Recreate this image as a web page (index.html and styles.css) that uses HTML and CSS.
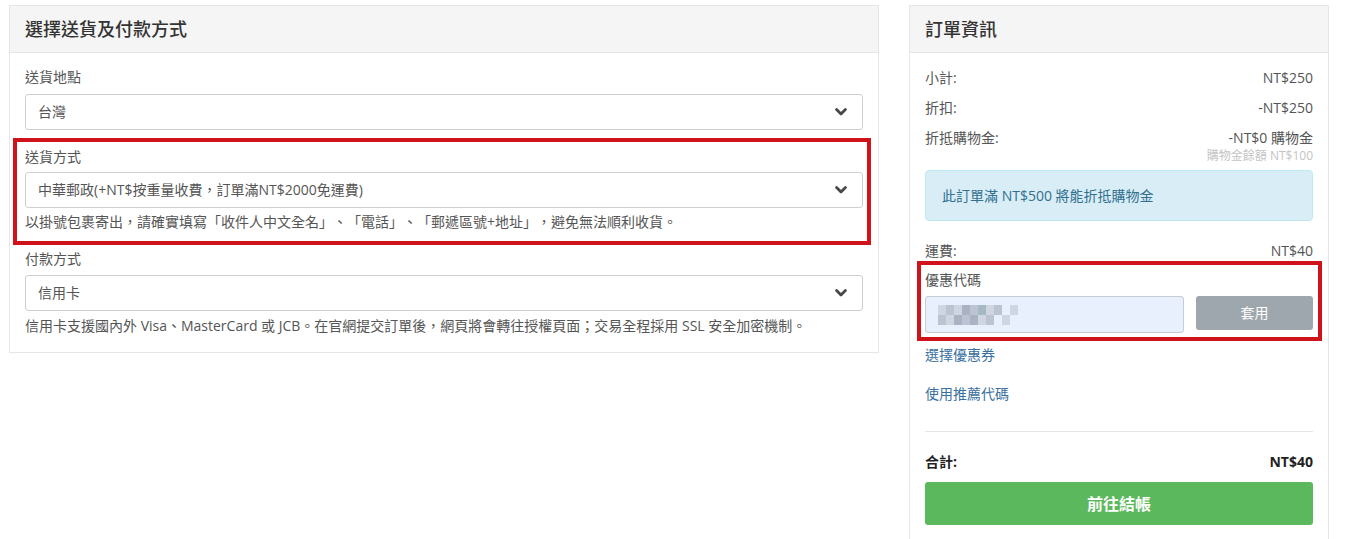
FILE: index.html
```html
<!DOCTYPE html>
<html lang="zh-Hant">
<head>
<meta charset="utf-8">
<title>結帳</title>
<link rel="stylesheet" href="styles.css">
</head>
<body>
<div class="page">
  <section class="panel panel-left">
    <div class="panel-head">選擇送貨及付款方式</div>
    <div class="panel-body">
      <div class="label first">送貨地點</div>
      <div class="select">
        <span>台灣</span>
        <svg class="chev" width="12" height="8" viewBox="0 0 12 8"><polyline points="1.6,1.6 6,6 10.4,1.6" fill="none" stroke="#474747" stroke-width="2.8" stroke-linecap="round" stroke-linejoin="round"/></svg>
      </div>
      <div class="highlight hl-left">
        <div class="label l2">送貨方式</div>
        <div class="select s2">
          <span>中華郵政(+NT$按重量收費，訂單滿NT$2000免運費)</span>
          <svg class="chev" width="12" height="8" viewBox="0 0 12 8"><polyline points="1.6,1.6 6,6 10.4,1.6" fill="none" stroke="#474747" stroke-width="2.8" stroke-linecap="round" stroke-linejoin="round"/></svg>
        </div>
        <div class="help h2">以掛號包裹寄出，請確實填寫「收件人中文全名」、「電話」、「郵遞區號+地址」，避免無法順利收貨。</div>
      </div>
      <div class="label l3">付款方式</div>
      <div class="select s3">
        <span>信用卡</span>
        <svg class="chev" width="12" height="8" viewBox="0 0 12 8"><polyline points="1.6,1.6 6,6 10.4,1.6" fill="none" stroke="#474747" stroke-width="2.8" stroke-linecap="round" stroke-linejoin="round"/></svg>
      </div>
      <div class="help h3">信用卡支援國內外 Visa、MasterCard 或 JCB。在官網提交訂單後，網頁將會轉往授權頁面；交易全程採用 SSL 安全加密機制。</div>
    </div>
  </section>

  <section class="panel panel-right">
    <div class="panel-head">訂單資訊</div>
    <div class="panel-body rbody">
      <div class="row"><span>小計:</span><span>NT$250</span></div>
      <div class="row"><span>折扣:</span><span>-NT$250</span></div>
      <div class="row last"><span>折抵購物金:</span><span>-NT$0 購物金</span></div>
      <div class="balance">購物金餘額 NT$100</div>
      <div class="alert">此訂單滿 NT$500 將能折抵購物金</div>
      <div class="row ship"><span>運費:</span><span>NT$40</span></div>
      <div class="highlight hl-right">
        <div class="label l4">優惠代碼</div>
        <div class="coupon">
          <div class="code-input">
            <div class="blur">
              <div class="brow"><i class="c1"></i><i class="c2"></i><i class="c1"></i><i class="c3"></i><i class="c2"></i><i class="c4"></i><i class="c1"></i><i class="c2"></i><i class="c0"></i><i class="c1"></i></div>
              <div class="brow"><i class="c2"></i><i class="c1"></i><i class="c3"></i><i class="c2"></i><i class="c3"></i><i class="c1"></i><i class="c2"></i><i class="c0"></i><i class="c1"></i><i class="c0"></i></div>
            </div>
          </div>
          <div class="apply">套用</div>
        </div>
      </div>
      <a class="link first-link">選擇優惠券</a>
      <a class="link second-link">使用推薦代碼</a>
      <div class="divider"></div>
      <div class="row total"><span>合計:</span><span>NT$40</span></div>
      <div class="checkout">前往結帳</div>
    </div>
  </section>
</div>
</body>
</html>
```

FILE: styles.css
```css
* { box-sizing: border-box; }
html, body { margin: 0; padding: 0; background: #fff; }
body {
  font-family: "Open Sans", "Noto Sans CJK TC", sans-serif;
  font-size: 14px;
  color: #555;
  line-height: 20px;
  text-spacing-trim: space-all;
}
.page {
  display: flex;
  align-items: flex-start;
  gap: 30px;
  padding: 5px 0 0 9px;
}
.panel {
  background: #fff;
  border: 1px solid #e6e6e6;
}
.panel-left { width: 870px; }
.panel-right { width: 420px; border-bottom: none; }
.panel-head {
  height: 47px;
  background: #f5f5f5;
  border-bottom: 1px solid #e6e6e6;
  padding: 11px 15px 0;
  font-size: 18px;
  line-height: 24px;
  color: #333;
  font-weight: 500;
}
.panel-body { padding: 14px 15px 16px 15px; }
.label { color: #555; line-height: 20px; }
.label.first { margin-bottom: 7px; }
.select {
  height: 36px;
  border: 1px solid #cfcfcf;
  border-radius: 3px;
  display: flex;
  align-items: center;
  justify-content: space-between;
  padding: 0 15px 0 12px;
  color: #555;
}
.chev { display: block; }
.highlight { border: 4px solid #d0121b; }
.hl-left {
  margin: 8px -8px 0 -12px;
  padding: 5px 4px 9px 8px;
}
.l2 { margin-bottom: 5px; }
.help { color: #555; }
.h2 { margin-top: 4px; }
.l3 { margin-top: 4px; margin-bottom: 6px; }
.h3 { margin-top: 5px; }

.rbody { padding: 15px 15px 40px 15px; }
.row {
  display: flex;
  justify-content: space-between;
  line-height: 20px;
  color: #555;
  margin-bottom: 10px;
}
.row.last { margin-bottom: 0; }
.balance {
  text-align: right;
  font-size: 12px;
  line-height: 14px;
  color: #c4c4c4;
  margin-top: 1px;
}
.alert {
  margin-top: 7px;
  background: #d9edf7;
  border: 1px solid #bce8f1;
  border-radius: 4px;
  color: #31708f;
  padding: 15px 16px;
  line-height: 19px;
}
.row.ship { margin-top: 20px; margin-bottom: 0; }
.hl-right {
  margin: 0 -9px 0 -8px;
  padding: 5px 5px 4px 4px;
}
.l4 { margin-bottom: 6px; }
.coupon {
  display: flex;
  align-items: flex-start;
  gap: 12px;
}
.code-input {
  flex: 0 0 259px;
  height: 37px;
  background: #e8f0fe;
  border: 1px solid #c9cdd3;
  border-radius: 3px;
  display: flex;
  align-items: center;
  padding-left: 12px;
}
.blur { display: flex; flex-direction: column; }
.brow { display: flex; }
.brow i { display: block; width: 8px; height: 10px; }
.c0 { background: #e8f0fe; }
.c1 { background: #cfd6e2; }
.c2 { background: #bcc3d2; }
.c3 { background: #aab3c3; }
.c4 { background: #a5b8c4; }
.apply {
  flex: 1;
  height: 34px;
  background: #9ea7ad;
  border-radius: 3px;
  color: #fff;
  display: flex;
  align-items: center;
  justify-content: center;
  font-size: 14px;
}
.link {
  display: block;
  color: #3a6f9f;
  line-height: 20px;
  cursor: pointer;
}
.first-link { margin-top: 4px; }
.second-link { margin-top: 19px; }
.divider {
  margin-top: 27px;
  border-top: 1px solid #e6e6e6;
}
.row.total {
  margin-top: 20px;
  margin-bottom: 0;
  font-weight: 700;
  color: #222;
}
.checkout {
  margin-top: 10px;
  height: 43px;
  background: #5cb85c;
  border-radius: 3px;
  color: #fff;
  font-size: 16px;
  font-weight: 700;
  display: flex;
  align-items: center;
  justify-content: center;
}
```
